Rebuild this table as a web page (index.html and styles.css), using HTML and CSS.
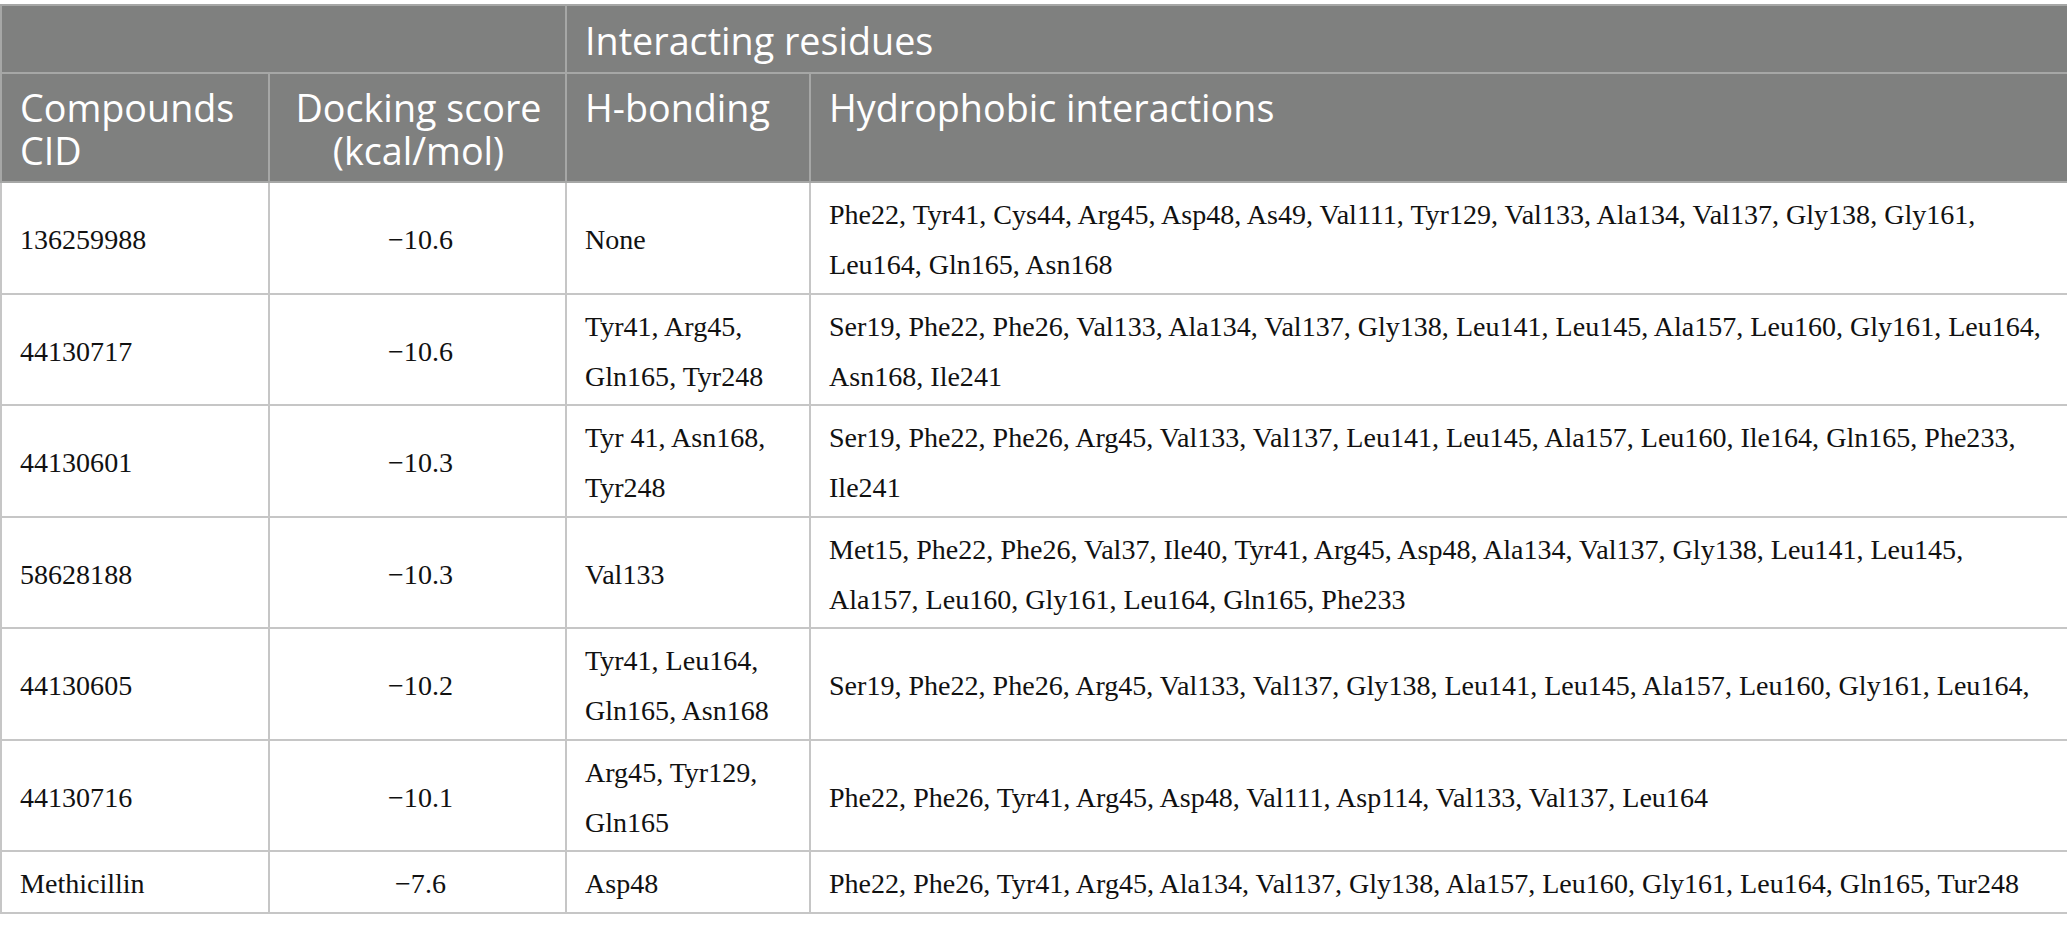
FILE: index.html
```html
<!DOCTYPE html>
<html lang="en">
<head>
<meta charset="utf-8">
<title>Docking results</title>
<link rel="stylesheet" href="styles.css">
</head>
<body>
<table class="data">
  <colgroup>
    <col class="c1">
    <col class="c2">
    <col class="c3">
    <col class="c4">
  </colgroup>
  <thead>
    <tr class="group-row">
      <th colspan="2"></th>
      <th colspan="2">Interacting residues</th>
    </tr>
    <tr class="label-row">
      <th>Compounds CID</th>
      <th class="center">Docking score (kcal/mol)</th>
      <th>H-bonding</th>
      <th>Hydrophobic interactions</th>
    </tr>
  </thead>
  <tbody>
    <tr>
      <td>136259988</td>
      <td class="center">&minus;10.6</td>
      <td>None</td>
      <td>Phe22, Tyr41, Cys44, Arg45, Asp48, As49, Val111, Tyr129, Val133, Ala134, Val137, Gly138, Gly161, Leu164, Gln165, Asn168</td>
    </tr>
    <tr>
      <td>44130717</td>
      <td class="center">&minus;10.6</td>
      <td>Tyr41, Arg45, Gln165, Tyr248</td>
      <td>Ser19, Phe22, Phe26, Val133, Ala134, Val137, Gly138, Leu141, Leu145, Ala157, Leu160, Gly161, Leu164, Asn168, Ile241</td>
    </tr>
    <tr>
      <td>44130601</td>
      <td class="center">&minus;10.3</td>
      <td>Tyr 41, Asn168, Tyr248</td>
      <td>Ser19, Phe22, Phe26, Arg45, Val133, Val137, Leu141, Leu145, Ala157, Leu160, Ile164, Gln165, Phe233, Ile241</td>
    </tr>
    <tr>
      <td>58628188</td>
      <td class="center">&minus;10.3</td>
      <td>Val133</td>
      <td>Met15, Phe22, Phe26, Val37, Ile40, Tyr41, Arg45, Asp48, Ala134, Val137, Gly138, Leu141, Leu145, Ala157, Leu160, Gly161, Leu164, Gln165, Phe233</td>
    </tr>
    <tr>
      <td>44130605</td>
      <td class="center">&minus;10.2</td>
      <td>Tyr41, Leu164, Gln165, Asn168</td>
      <td>Ser19, Phe22, Phe26, Arg45, Val133, Val137, Gly138, Leu141, Leu145, Ala157, Leu160, Gly161, Leu164,</td>
    </tr>
    <tr>
      <td>44130716</td>
      <td class="center">&minus;10.1</td>
      <td>Arg45, Tyr129, Gln165</td>
      <td>Phe22, Phe26, Tyr41, Arg45, Asp48, Val111, Asp114, Val133, Val137, Leu164</td>
    </tr>
    <tr>
      <td>Methicillin</td>
      <td class="center">&minus;7.6</td>
      <td>Asp48</td>
      <td>Phe22, Phe26, Tyr41, Arg45, Ala134, Val137, Gly138, Ala157, Leu160, Gly161, Leu164, Gln165, Tur248</td>
    </tr>
  </tbody>
</table>
</body>
</html>
```

FILE: styles.css
```css
html, body {
  margin: 0;
  padding: 0;
  background: #ffffff;
}

body {
  padding-top: 4px;
}

.data {
  width: 2067px;
  border-collapse: collapse;
  table-layout: fixed;
}

.c1 { width: 268px; }
.c2 { width: 297px; }
.c3 { width: 244px; }
.c4 { width: 1258px; }

.data th {
  background: #7f807f;
  color: #ffffff;
  font-family: "Open Sans", "Noto Sans", sans-serif;
  font-weight: 400;
  font-size: 37.7px;
  line-height: 43px;
  text-align: left;
  vertical-align: top;
  padding: 12px 16px 9px 18px;
  border: 2px solid #a6a7a6;
}

.data .group-row th {
  padding-top: 13px;
  padding-bottom: 10px;
}

.data td {
  font-family: "Liberation Serif", "Times New Roman", serif;
  font-size: 28.05px;
  line-height: 50px;
  color: #111111;
  vertical-align: middle;
  padding: 7px 12px 2.5px 18px;
  border: 2px solid #c6c6c6;
}

.data th.center,
.data td.center {
  text-align: center;
}
```
